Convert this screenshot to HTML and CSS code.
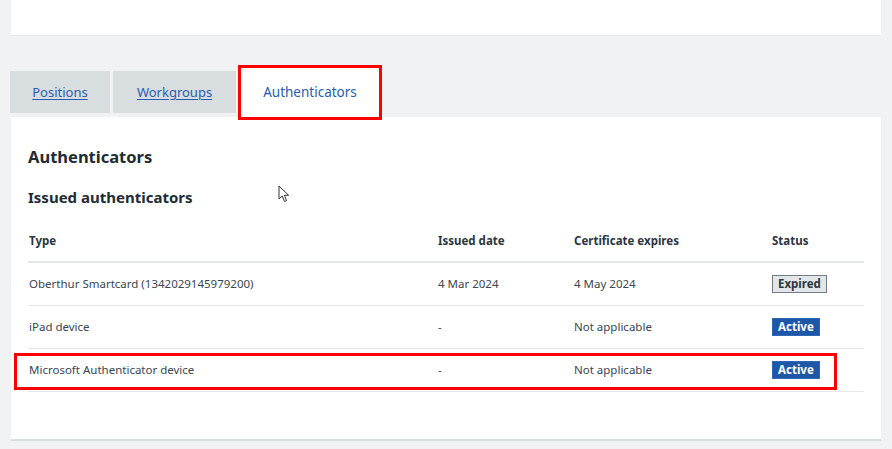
FILE: index.html
```html
<!DOCTYPE html>
<html lang="en">
<head>
<meta charset="utf-8">
<title>Authenticators</title>
<link rel="stylesheet" href="styles.css">
</head>
<body>
<div class="top-card"></div>

<nav class="tabs">
  <a class="tab" href="#">Positions</a>
  <a class="tab" href="#">Workgroups</a>
  <span class="tab tab-active">Authenticators</span>
</nav>

<section class="panel">
  <h2 class="title">Authenticators</h2>
  <h3 class="subtitle">Issued authenticators</h3>
  <table class="auth-table">
    <thead>
      <tr>
        <th class="c-type">Type</th>
        <th class="c-issued">Issued date</th>
        <th class="c-cert">Certificate expires</th>
        <th class="c-status">Status</th>
      </tr>
    </thead>
    <tbody>
      <tr>
        <td>Oberthur Smartcard (1342029145979200)</td>
        <td>4 Mar 2024</td>
        <td>4 May 2024</td>
        <td><span class="tag tag-grey">Expired</span></td>
      </tr>
      <tr>
        <td>iPad device</td>
        <td>-</td>
        <td>Not applicable</td>
        <td><span class="tag tag-blue">Active</span></td>
      </tr>
      <tr>
        <td>Microsoft Authenticator device</td>
        <td>-</td>
        <td>Not applicable</td>
        <td><span class="tag tag-blue">Active</span></td>
      </tr>
    </tbody>
  </table>
  <div class="highlight"></div>
  <svg class="cursor" width="12" height="18" viewBox="0 0 12 18" aria-hidden="true">
    <path d="M1 1 L1 14 L4.2 11 L6.6 16.5 L8.6 15.6 L6.3 10.3 L10.6 10.3 Z" fill="#fff" stroke="#333" stroke-width="1" stroke-linejoin="round"/>
  </svg>
</section>
</body>
</html>
```

FILE: styles.css
```css
* { box-sizing: border-box; }

body {
  margin: 0;
  background: #f0f2f4;
  font-family: "Noto Sans", "Open Sans", sans-serif;
  color: #212b32;
}

.top-card {
  margin: 0 11px;
  height: 36px;
  background: #fff;
  border-bottom: 1px solid #e3e7ea;
}

.tabs {
  display: flex;
  align-items: flex-end;
  margin: 32px 0 0 10px;
  height: 49px;
}

.tab {
  display: flex;
  align-items: center;
  justify-content: center;
  height: 42px;
  background: #d8dde0;
  color: #2a5db0;
  font-size: 13px;
  text-decoration: underline;
  text-underline-offset: 2px;
  margin-right: 3px;
  margin-bottom: 4px;
}

.tab:nth-child(1) { width: 100px; }
.tab:nth-child(2) { width: 123px; margin-right: 5px; }

.tab-active {
  position: relative;
  z-index: 2;
  width: 138px;
  height: 49px;
  background: #fff;
  text-decoration: none;
  color: #2a5db0;
  font-size: 13.5px;
  outline: 3px solid #ff0000;
  margin-bottom: 0;
  padding-bottom: 1px;
}

.panel {
  position: relative;
  margin: 0 11px;
  background: #fff;
  border-bottom: 2px solid #d8dde0;
  padding: 27px 17px 47px;
}

.title {
  margin: 0;
  font-size: 16.5px;
  font-weight: 700;
  line-height: 26px;
}

.subtitle {
  margin: 14px 0 0;
  font-size: 15px;
  font-weight: 700;
  line-height: 26px;
}

.auth-table {
  margin-top: 13px;
  width: 100%;
  border-collapse: collapse;
  font-size: 11.5px;
}

.auth-table th {
  text-align: left;
  font-weight: 700;
  color: #2b3640;
  height: 39px;
  padding: 0 0 3px 1px;
  border-bottom: 2px solid #e4e8ea;
}

.auth-table td {
  height: 43px;
  padding: 0 0 0 1px;
  color: #3b4650;
  border-bottom: 1px solid #e4e8ea;
}

.c-type { width: 409px; }
.c-issued { width: 136px; }
.c-cert { width: 198px; }

.tag {
  display: inline-block;
  font-size: 11.5px;
  font-weight: 700;
  line-height: 16px;
  padding: 0 5px;
  border: 1px solid;
}

.tag-grey {
  background: #e3e6e8;
  border-color: #6f7c86;
  color: #2b3640;
}

.tag-blue {
  background: #1f57a8;
  border-color: #2f66b5;
  color: #fff;
}

.highlight {
  position: absolute;
  left: 3px;
  top: 236px;
  width: 823px;
  height: 37px;
  border: 3px solid #ff0000;
}

.cursor {
  position: absolute;
  left: 267px;
  top: 68px;
}
```
